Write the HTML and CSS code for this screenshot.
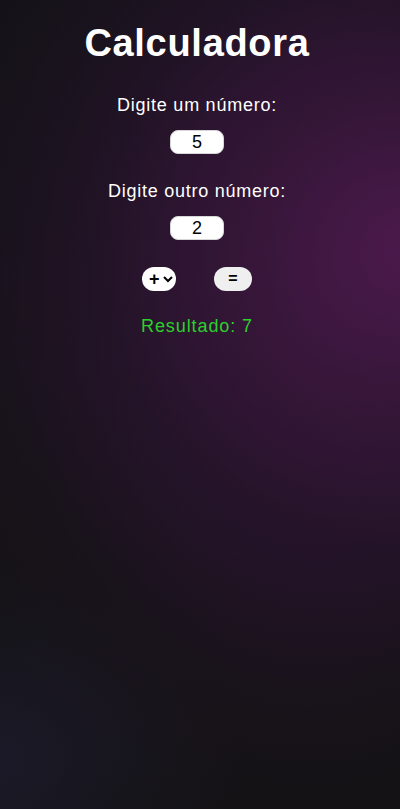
FILE: index.html
```html
<!DOCTYPE html>
<html lang="pt-BR">
<head>
<meta charset="utf-8">
<title>Calculadora</title>
<link rel="stylesheet" href="styles.css">
</head>
<body>
<main class="calc">
  <h1 class="title">Calculadora</h1>
  <label class="label" for="n1">Digite um número:</label>
  <input class="num" id="n1" type="text" value="5">
  <label class="label" for="n2">Digite outro número:</label>
  <input class="num" id="n2" type="text" value="2">
  <div class="controls">
    <select class="op">
      <option>+</option>
      <option>-</option>
      <option>*</option>
      <option>/</option>
    </select>
    <button class="eq" type="button">=</button>
  </div>
  <p class="result">Resultado: 7</p>
</main>
</body>
</html>
```
FILE: styles.css
```css
html, body {
  margin: 0;
  padding: 0;
  height: 100%;
}
body {
  font-family: "Liberation Sans", Arial, sans-serif;
  color: #fff;
  background-color: #131214;
  background-image:
    radial-gradient(ellipse 440px 420px at 410px 250px, rgba(80, 26, 80, 0.9) 0%, rgba(68, 24, 70, 0.55) 35%, rgba(50, 20, 54, 0.2) 70%, rgba(30, 18, 34, 0) 100%),
    radial-gradient(ellipse 380px 560px at 310px 320px, rgba(50, 20, 54, 0.7) 0%, rgba(42, 20, 48, 0.55) 45%, rgba(34, 20, 38, 0.25) 75%, rgba(30, 18, 34, 0) 100%),
    radial-gradient(ellipse 240px 200px at 0px 760px, rgba(28, 26, 42, 0.9) 0%, rgba(28, 26, 42, 0) 100%),
    linear-gradient(180deg, #141218 0%, #17131a 45%, #131214 80%, #121212 100%);
  min-height: 809px;
}
.calc {
  display: flex;
  flex-direction: column;
  align-items: center;
  padding-top: 21px;
  padding-right: 6px;
}
.title {
  margin: 0;
  font-size: 38px;
  font-weight: bold;
  line-height: 44px;
  letter-spacing: 0.7px;
}
.label {
  margin-top: 29px;
  font-size: 18px;
  line-height: 22px;
  letter-spacing: 0.75px;
}
.label + .num {
  margin-top: 14px;
}
.calc .num ~ .label {
  margin-top: 26px;
}
.num {
  box-sizing: border-box;
  width: 54px;
  height: 24px;
  border: 1px solid #d6d6d6;
  border-radius: 8px;
  background: #fff;
  text-align: center;
  font-family: "Liberation Sans", Arial, sans-serif;
  font-size: 18px;
  color: #000;
  padding: 0;
}
.controls {
  display: flex;
  align-items: center;
  gap: 38px;
  margin-top: 27px;
}
.op {
  box-sizing: border-box;
  width: 34px;
  height: 24px;
  border: none;
  border-radius: 12px;
  background: #fff;
  font-family: "Liberation Sans", Arial, sans-serif;
  font-size: 18px;
  font-weight: bold;
  color: #000;
  padding: 0 0 0 3px;
}
.eq {
  box-sizing: border-box;
  width: 38px;
  height: 24px;
  border: none;
  border-radius: 12px;
  background: #efefef;
  font-family: "Liberation Sans", Arial, sans-serif;
  font-size: 16px;
  font-weight: bold;
  color: #000;
  padding: 0;
}
.result {
  margin: 24px 0 0;
  font-size: 18px;
  line-height: 22px;
  letter-spacing: 0.9px;
  color: #2bd12b;
}
```
